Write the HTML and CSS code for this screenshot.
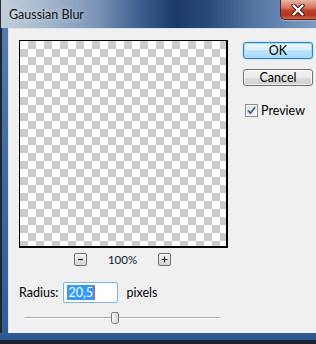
FILE: index.html
```html
<!DOCTYPE html>
<html lang="en">
<head>
    <meta charset="UTF-8">
    <meta name="viewport" content="width=device-width, initial-scale=1.0">
    <title>Gaussian Blur</title>
    <link rel="stylesheet" href="styles.css">
</head>
<body>
    <div class="window">
        <div class="titlebar">
            <div class="title">Gaussian Blur</div>
            <div class="close-button">
                <svg width="14" height="12" viewBox="0 0 14 12">
                    <path d="M2.5 1.5 L11.5 10.5 M11.5 1.5 L2.5 10.5" stroke="#3a1410" stroke-width="4.2" stroke-linecap="round"/>
                    <path d="M2.5 1.5 L11.5 10.5 M11.5 1.5 L2.5 10.5" stroke="#ffffff" stroke-width="2.4" stroke-linecap="round"/>
                </svg>
            </div>
        </div>

        <div class="middle">
            <div class="frame-left"></div>
            <div class="client">
                <div class="left-column">
                    <div class="preview-box"></div>

                    <div class="zoom-row">
                        <div class="zoom-button">
                            <svg width="11" height="11" viewBox="0 0 11 11"><path d="M3 5.5 H8" stroke="#222" stroke-width="1.2"/></svg>
                        </div>
                        <span class="zoom-value">100%</span>
                        <div class="zoom-button">
                            <svg width="11" height="11" viewBox="0 0 11 11"><path d="M2.5 5.5 H8.5 M5.5 2.5 V8.5" stroke="#222" stroke-width="1.2"/></svg>
                        </div>
                    </div>

                    <div class="radius-row">
                        <span class="label">Radius:</span>
                        <div class="radius-input">
                            <span class="selected-text">20,5</span><span class="caret"></span>
                        </div>
                        <span class="label">pixels</span>
                    </div>

                    <div class="slider">
                        <div class="slider-track"></div>
                        <div class="slider-thumb"></div>
                    </div>
                </div>

                <div class="right-column">
                    <button class="dialog-button default-button">OK</button>
                    <button class="dialog-button">Cancel</button>
                    <label class="preview-check">
                        <span class="checkbox">
                            <svg width="9" height="9" viewBox="0 0 9 9"><path d="M1 4.5 L3.5 7.2 L8 1.2" stroke="#3d5a95" stroke-width="1.8" fill="none"/></svg>
                        </span>
                        Preview
                    </label>
                </div>
            </div>
        </div>

        <div class="frame-bottom"></div>
    </div>
</body>
</html>
```

FILE: styles.css
```css
body {
    margin: 0;
    padding: 0;
    width: 316px;
    height: 344px;
    overflow: hidden;
    background-color: #1b2430;
    font-family: 'Lato', 'Liberation Sans', Arial, sans-serif;
    font-size: 12.5px;
    color: #000;
}

.window {
    display: flex;
    flex-direction: column;
    height: 344px;
}

.titlebar {
    height: 28px;
    display: flex;
    align-items: flex-start;
    padding-left: 9px;
    background: linear-gradient(90deg, #c2cedc 0%, #a9bbd0 12%, #7d96b8 30%, #3a5b8c 45%, #1b3a6a 56%, #2a4a7b 66%, #5878a5 82%, #7f9bc0 100%);
    box-shadow: inset 1px 0 #27313d;
}

.title {
    margin-top: 7px;
    font-size: 12.5px;
    color: #111;
    text-shadow: 0 0 6px rgba(255, 255, 255, 0.7);
}

.close-button {
    margin-left: auto;
    width: 36px;
    height: 20px;
    box-sizing: border-box;
    display: flex;
    align-items: center;
    justify-content: center;
    padding-right: 2px;
    border: 1px solid #51231c;
    border-top: none;
    border-right: none;
    border-radius: 0 0 0 5px;
    background: linear-gradient(#eab3a4 0%, #d9735f 40%, #c2402a 55%, #b7321e 80%, #d06a4c 100%);
    box-shadow: 0 1px 0 #a5b8d0;
}

.middle {
    display: flex;
    flex: 1;
}

.frame-left {
    width: 8px;
    background: linear-gradient(#5679ab, #3e6aa2 50%, #2f5b97);
    box-shadow: inset 2px 0 #1c2633;
}

.client {
    flex: 1;
    display: flex;
    padding: 11px 0 0 10px;
    background-color: #f0f0f0;
    border-left: 1px solid #dfe4ea;
    border-top: 1px solid #dfe4ea;
}

.left-column {
    width: 209px;
    display: flex;
    flex-direction: column;
}

.preview-box {
    width: 209px;
    height: 208px;
    box-sizing: border-box;
    border-style: solid;
    border-color: #000;
    border-width: 1px 2px 2px 1px;
    background-color: #fff;
    background-image: conic-gradient(#cccccc 25%, #ffffff 0 50%, #cccccc 0 75%, #ffffff 0);
    background-size: 16px 16px;
}

.zoom-row {
    display: flex;
    align-items: center;
    justify-content: center;
    gap: 21px;
    margin-top: 5px;
    padding-right: 2px;
}

.zoom-button {
    width: 13px;
    height: 13px;
    box-sizing: border-box;
    display: flex;
    align-items: center;
    justify-content: center;
    border: 1px solid #707070;
    border-radius: 2px;
    background: linear-gradient(#f6f6f6, #e4e4e4 50%, #d6d6d6);
}

.zoom-value {
    font-size: 11.5px;
    color: #0b1a33;
}

.radius-row {
    display: flex;
    align-items: center;
    margin-top: 16px;
}

.label {
    font-size: 12.5px;
}

.radius-input {
    width: 55px;
    height: 21px;
    box-sizing: border-box;
    margin: 0 8px 0 5px;
    padding: 2px 0 0 3px;
    display: flex;
    align-items: flex-start;
    border: 1px solid #7fb4e8;
    border-radius: 2px;
    background-color: #fff;
}

.selected-text {
    background-color: #3399ff;
    color: #fff;
    font-size: 12.5px;
    line-height: 15px;
    padding: 0 1px;
}

.caret {
    width: 1px;
    height: 15px;
    background-color: #e0641c;
}

.slider {
    position: relative;
    height: 12px;
    margin-top: 9px;
    margin-left: 6px;
    width: 195px;
}

.slider-track {
    margin-top: 5px;
    height: 1px;
    background-color: #a8a8a8;
    border-bottom: 1px solid #ffffff;
}

.slider-thumb {
    position: absolute;
    left: 86px;
    top: 0;
    width: 8px;
    height: 12px;
    box-sizing: border-box;
    border: 1px solid #7c7c7c;
    border-radius: 2px 2px 3px 3px;
    background: linear-gradient(90deg, #fdfdfd, #e2e2e2 60%, #cfcfcf);
}

.right-column {
    display: flex;
    flex-direction: column;
    margin-left: 15px;
    padding-top: 2px;
}

.dialog-button {
    width: 70px;
    height: 17px;
    padding: 0;
    font-family: 'Lato', 'Liberation Sans', Arial, sans-serif;
    font-size: 12.5px;
    line-height: 14px;
    color: #000;
    border: 1px solid #707070;
    border-radius: 3px;
    background: linear-gradient(#f2f2f2, #ebebeb 50%, #dddddd 50%, #cfcfcf);
    box-shadow: inset 0 0 0 1px rgba(255, 255, 255, 0.7);
    margin-bottom: 10px;
}

.default-button {
    border-color: #3c7fb1;
    background: linear-gradient(#eaf6fd, #d9f0fc 50%, #bee6fd 50%, #a7d9f5);
    box-shadow: inset 0 0 0 1px #9fdcf9, 0 0 2px #7fcdf3;
}

.preview-check {
    display: flex;
    align-items: center;
    gap: 3px;
    margin-top: 7px;
    margin-left: 2px;
    font-size: 12.5px;
}

.checkbox {
    width: 13px;
    height: 13px;
    box-sizing: border-box;
    display: flex;
    align-items: center;
    justify-content: center;
    border: 1px solid #8e8f8f;
    background: linear-gradient(135deg, #dcdcdc, #fbfbfb);
    box-shadow: inset 0 0 0 1px #f4f4f4;
}

.frame-bottom {
    height: 11px;
    background: linear-gradient(#2f5b97 0, #2a5590 7px, #1a2330 7px);
}
```
